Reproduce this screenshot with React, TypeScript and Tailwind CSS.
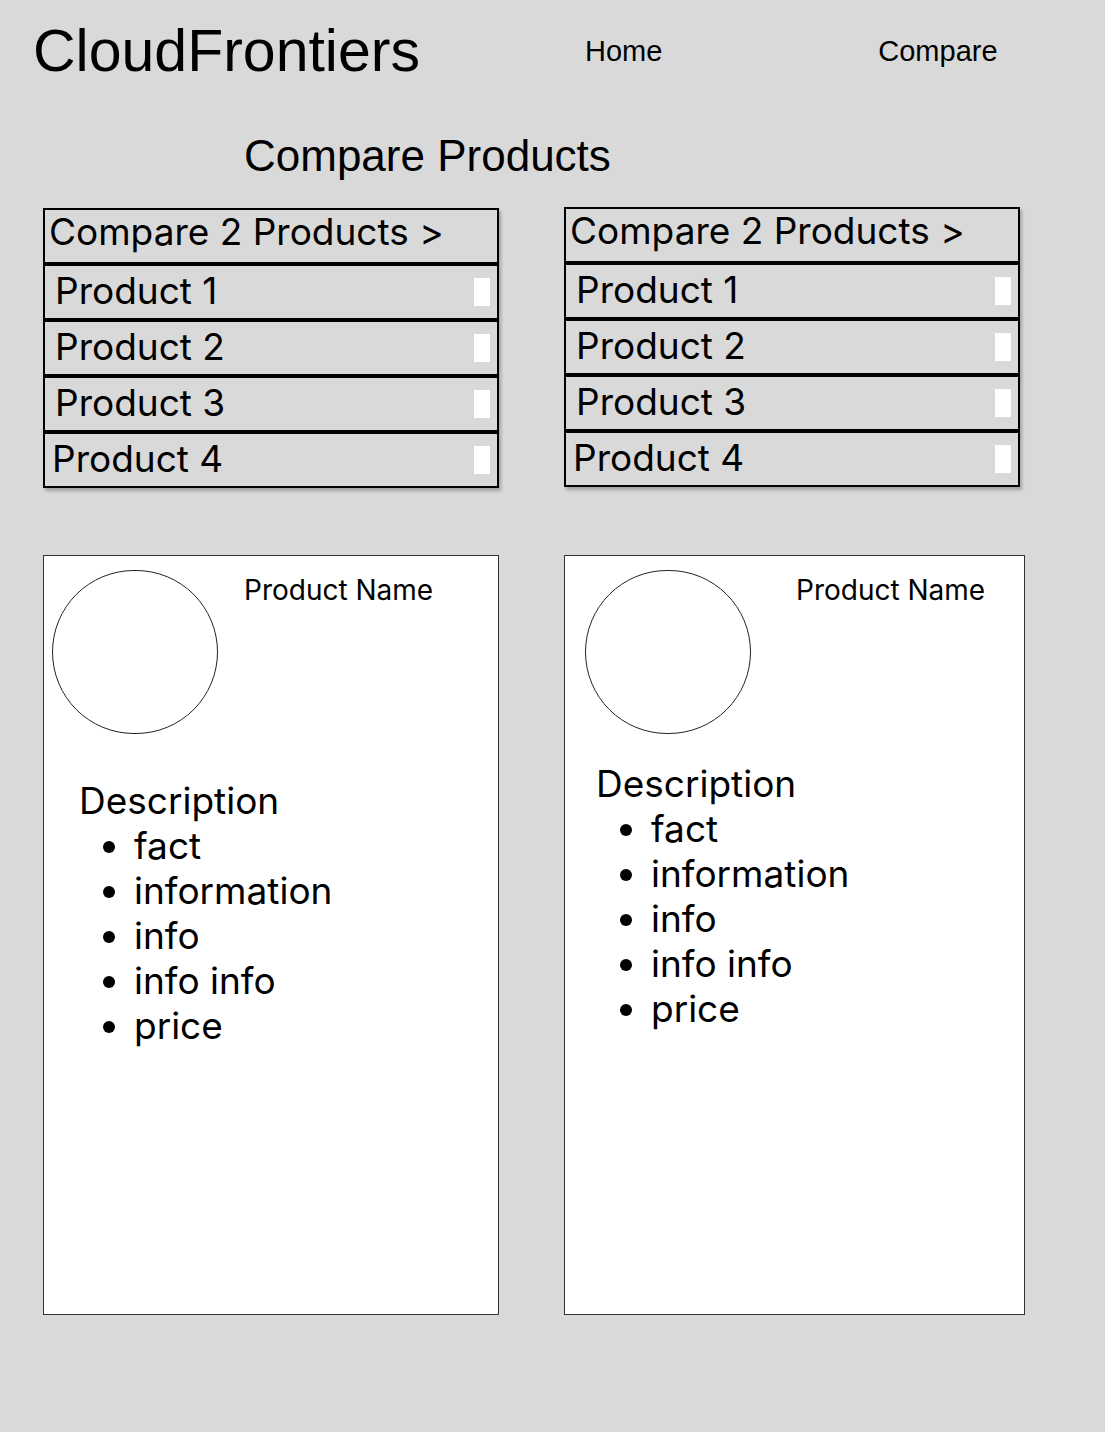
import React from 'react'

const products = [
  { name: 'Product 1', pad: 'pl-[10px]' },
  { name: 'Product 2', pad: 'pl-[10px]' },
  { name: 'Product 3', pad: 'pl-[10px]' },
  { name: 'Product 4', pad: 'pl-[7px]' },
]

const facts = ['fact', 'information', 'info', 'info info', 'price']

const ProductList: React.FC = () => (
  <div className="w-[456px] shadow-[2px_3px_3px_rgba(0,0,0,0.25)]">
    <div className="h-[56px] border-2 border-black pl-[4px] text-[37px] leading-[44px] text-black">
      Compare 2 Products &gt;
    </div>
    {products.map((p) => (
      <div
        key={p.name}
        className={`flex h-[56px] items-center justify-between border-2 border-black pr-[7px] text-[37px] text-black ${p.pad}`}
      >
        <span className="-mt-[3px]">{p.name}</span>
        <span className="h-[28px] w-[16px] bg-white" />
      </div>
    ))}
  </div>
)

const ProductCard: React.FC<{ wide?: boolean; right?: boolean }> = ({ wide, right }) => (
  <div
    className={`flex h-[760px] flex-col border border-[#333] bg-white ${wide ? 'w-[461px]' : 'w-[456px]'}`}
  >
    <div className={`flex pt-[14px] ${right ? 'pl-[20px]' : 'pl-[8px]'}`}>
      <div className="h-[164px] w-[166px] rounded-full border border-[#222]" />
      <div
        className={`pt-[3px] text-[28px] leading-[34px] text-black ${right ? 'ml-[45px]' : 'ml-[26px]'}`}
      >
        Product Name
      </div>
    </div>
    <div className={right ? 'pl-[31px] pt-[27px]' : 'pl-[35px] pt-[44px]'}>
      <div className="text-[37px] leading-[45px] text-black">Description</div>
      <ul className="list-disc pl-[55px] text-[37px] leading-[45px] text-black">
        {facts.map((f) => (
          <li key={f}>{f}</li>
        ))}
      </ul>
    </div>
  </div>
)

const App: React.FC = () => {
  return (
    <div className="min-h-[1432px] w-full bg-[#d9d9d9] font-['Inter','Liberation_Sans',sans-serif]">
      <header className="flex items-start pt-[18px] font-['Liberation_Sans','Arial',sans-serif] text-black">
        <div className="ml-[33px] text-[59px] leading-[66px]">CloudFrontiers</div>
        <nav className="ml-[165px] mt-[16px] text-[29px] leading-[34px]">Home</nav>
        <nav className="ml-[216px] mt-[16px] text-[29px] leading-[34px]">Compare</nav>
      </header>
      <h1 className="ml-[244px] mt-[46px] font-['Liberation_Sans','Arial',sans-serif] text-[44px] leading-[52px] text-black">
        Compare Products
      </h1>
      <div className="ml-[43px] mt-[26px] flex gap-[65px]">
        <ProductList />
        <div className="-mt-[1px]">
          <ProductList />
        </div>
      </div>
      <div className="ml-[43px] mt-[67px] flex gap-[65px]">
        <ProductCard />
        <ProductCard wide right />
      </div>
    </div>
  )
}

export default App
